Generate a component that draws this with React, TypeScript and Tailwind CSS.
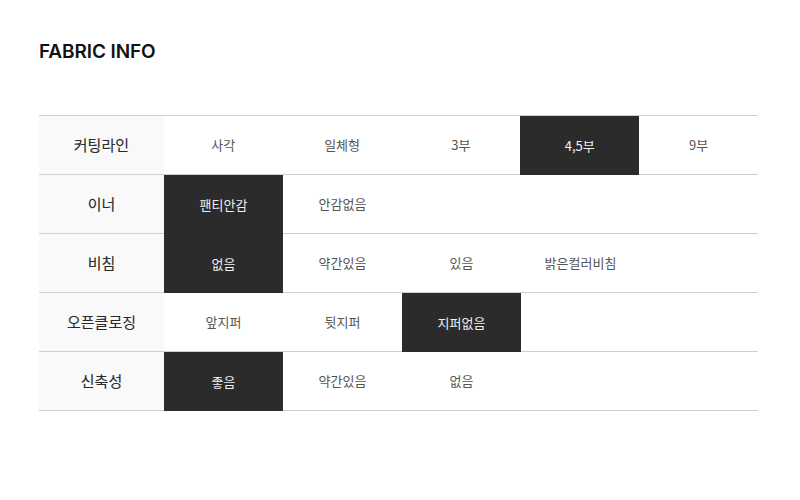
const rows: { label: string; options: string[]; selected: number }[] = [
  { label: "커팅라인", options: ["사각", "일체형", "3부", "4,5부", "9부"], selected: 3 },
  { label: "이너", options: ["팬티안감", "안감없음"], selected: 0 },
  { label: "비침", options: ["없음", "약간있음", "있음", "밝은컬러비침"], selected: 0 },
  { label: "오픈클로징", options: ["앞지퍼", "뒷지퍼", "지퍼없음"], selected: 2 },
  { label: "신축성", options: ["좋음", "약간있음", "없음"], selected: 0 },
];

export default function App() {
  return (
    <div
      className="w-[800px] h-[500px] bg-white px-[39px] pt-[40px]"
      style={{ fontFamily: '"Noto Sans CJK KR", "Noto Sans", sans-serif' }}
    >
      <h2
        className="text-[19px] font-semibold text-[#111] leading-[24px] tracking-[-0.1px]"
        style={{ fontFamily: 'Inter, "Noto Sans", sans-serif' }}
      >
        FABRIC INFO
      </h2>

      {/* fabric table */}
      <div className="mt-[51px] w-[719px] border-t border-[#cfcfcf]">
        {rows.map((row) => (
          <div key={row.label} className="flex h-[59px] border-b border-[#cfcfcf]">
            <div className="w-[125px] flex items-center justify-center bg-[#f9f9f9] text-[15px] font-normal text-[#2a2a2a] [-webkit-text-stroke:0.12px_#2a2a2a]">
              {row.label}
            </div>
            {row.options.map((opt, i) => (
              <div
                key={opt}
                className={
                  i === row.selected
                    ? "w-[119px] -mb-px flex items-center justify-center bg-[#2b2b2b] text-[13px] text-[#f0f0f0]"
                    : "w-[119px] flex items-center justify-center text-[13px] text-[#555]"
                }
              >
                {opt}
              </div>
            ))}
          </div>
        ))}
      </div>
    </div>
  );
}
